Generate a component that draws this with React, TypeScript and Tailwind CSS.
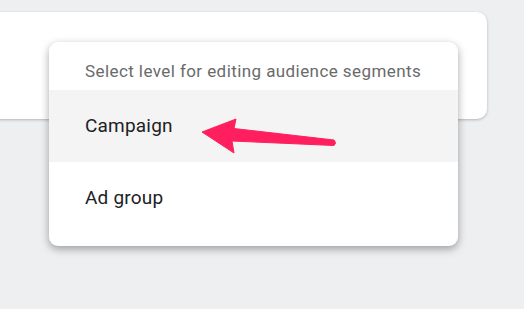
import React from "react";

export default function App() {
  return (
    <div
      className="relative h-[309px] w-[524px] overflow-hidden bg-[#eeeff1]"
      style={{ fontFamily: "Roboto, 'Noto Sans', sans-serif" }}
    >
      <div className="pt-[12px]">
        <div className="ml-[-12px] h-[107px] w-[499px] rounded-[10px] bg-white shadow-[0_1px_3px_rgba(0,0,0,0.25)]" />
      </div>

      <div className="absolute left-[49px] top-[42px] flex w-[409px] flex-col rounded-[9px] bg-white pb-[12px] shadow-[0_3px_8px_rgba(0,0,0,0.35)]">
        <div className="flex h-[48px] items-center px-[36px] pt-[12px] text-[17px] tracking-[0.42px] text-[#6a6a6a]">
          Select level for editing audience segments
        </div>
        <div className="flex h-[72px] items-center bg-[#f4f4f4] px-[36px] text-[19px] tracking-[0.2px] text-[#202124]">
          Campaign
        </div>
        <div className="flex h-[72px] items-center px-[36px] text-[19px] tracking-[0.2px] text-[#202124]">
          Ad group
        </div>
      </div>

      <svg className="absolute left-0 top-0" width="524" height="309" viewBox="0 0 524 309">
        <path
          d="M202 132 L236 119 L234 128.5 L334 140 Q337 143 334 145.5 L232 141 L234 153 Z"
          fill="#ff1f5e"
          stroke="#ff1f5e"
          strokeWidth="1"
          strokeLinejoin="round"
        />
      </svg>
    </div>
  );
}
